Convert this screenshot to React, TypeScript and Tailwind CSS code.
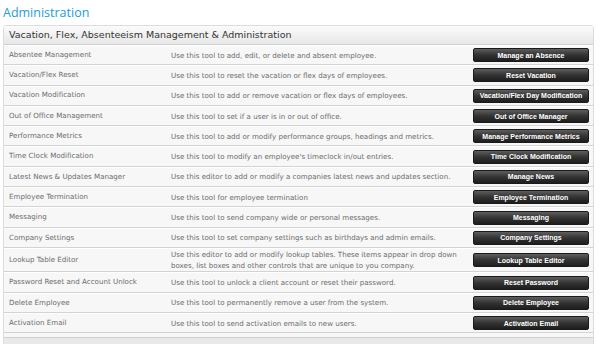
const rows: { name: string; desc: string[]; button: string }[] = [
  { name: "Absentee Management", desc: ["Use this tool to add, edit, or delete and absent employee."], button: "Manage an Absence" },
  { name: "Vacation/Flex Reset", desc: ["Use this tool to reset the vacation or flex days of employees."], button: "Reset Vacation" },
  { name: "Vacation Modification", desc: ["Use this tool to add or remove vacation or flex days of employees."], button: "Vacation/Flex Day Modification" },
  { name: "Out of Office Management", desc: ["Use this tool to set if a user is in or out of office."], button: "Out of Office Manager" },
  { name: "Performance Metrics", desc: ["Use this tool to add or modify performance groups, headings and metrics."], button: "Manage Performance Metrics" },
  { name: "Time Clock Modification", desc: ["Use this tool to modify an employee's timeclock in/out entries."], button: "Time Clock Modification" },
  { name: "Latest News & Updates Manager", desc: ["Use this editor to add or modify a companies latest news and updates section."], button: "Manage News" },
  { name: "Employee Termination", desc: ["Use this tool for employee termination"], button: "Employee Termination" },
  { name: "Messaging", desc: ["Use this tool to send company wide or personal messages."], button: "Messaging" },
  { name: "Company Settings", desc: ["Use this tool to set company settings such as birthdays and admin emails."], button: "Company Settings" },
  {
    name: "Lookup Table Editor",
    desc: [
      "Use this editor to add or modify lookup tables. These items appear in drop down",
      "boxes, list boxes and other controls that are unique to you company.",
    ],
    button: "Lookup Table Editor",
  },
  { name: "Password Reset and Account Unlock", desc: ["Use this tool to unlock a client account or reset their password."], button: "Reset Password" },
  { name: "Delete Employee", desc: ["Use this tool to permanently remove a user from the system."], button: "Delete Employee" },
  { name: "Activation Email", desc: ["Use this tool to send activation emails to new users."], button: "Activation Email" },
];

function ToolButton({ label }: { label: string }) {
  return (
    <button className="flex h-[14px] w-[116px] items-center justify-center rounded-[2px] border border-[#1a1a1a] bg-gradient-to-b from-[#5e5e5e] via-[#333333] to-[#1e1e1e] text-[7px] font-bold leading-none text-white [font-family:'Liberation_Sans',Arial,sans-serif]">
      {label}
    </button>
  );
}

export default function App() {
  return (
    <div className="h-[344px] w-[600px] overflow-hidden bg-white [font-family:'DejaVu_Sans',Verdana,sans-serif]">
      <h1 className="pl-[3px] pt-[4px] text-[12.5px] leading-[18px] text-[#1e9bd7] [font-family:'Open_Sans',sans-serif]">
        Administration
      </h1>

      <div className="ml-[3px] mt-[3px] w-[591px] rounded-t-[3px] border border-[#dcdcdc] bg-[#f7f7f7]">
        {/* section header */}
        <div className="flex h-[19px] items-center border-b border-[#d0d0d0] bg-gradient-to-b from-[#fbfbfb] to-[#e7e7e7] pl-[5px] text-[9.5px] text-[#333333]">
          Vacation, Flex, Absenteeism Management &amp; Administration
        </div>

        {rows.map((r) => (
          <div
            key={r.name}
            className={`flex items-center border-t border-t-white border-b border-b-[#d3d3d3] text-[7.1px] text-[#6b6b6b] ${
              r.desc.length > 1 ? "h-[24.5px]" : "h-[20.3px]"
            }`}
          >
            <div className="w-[167px] shrink-0 whitespace-nowrap pl-[5px]">{r.name}</div>
            <div className="w-[302px] shrink-0 whitespace-nowrap leading-[11px]">
              {r.desc.map((d) => (
                <div key={d}>{d}</div>
              ))}
            </div>
            <ToolButton label={r.button} />
          </div>
        ))}

        <div className="h-[4px]" />
        <div className="h-[10px] border-t border-[#d0d0d0] bg-[#e9e9e9]" />
      </div>
    </div>
  );
}
